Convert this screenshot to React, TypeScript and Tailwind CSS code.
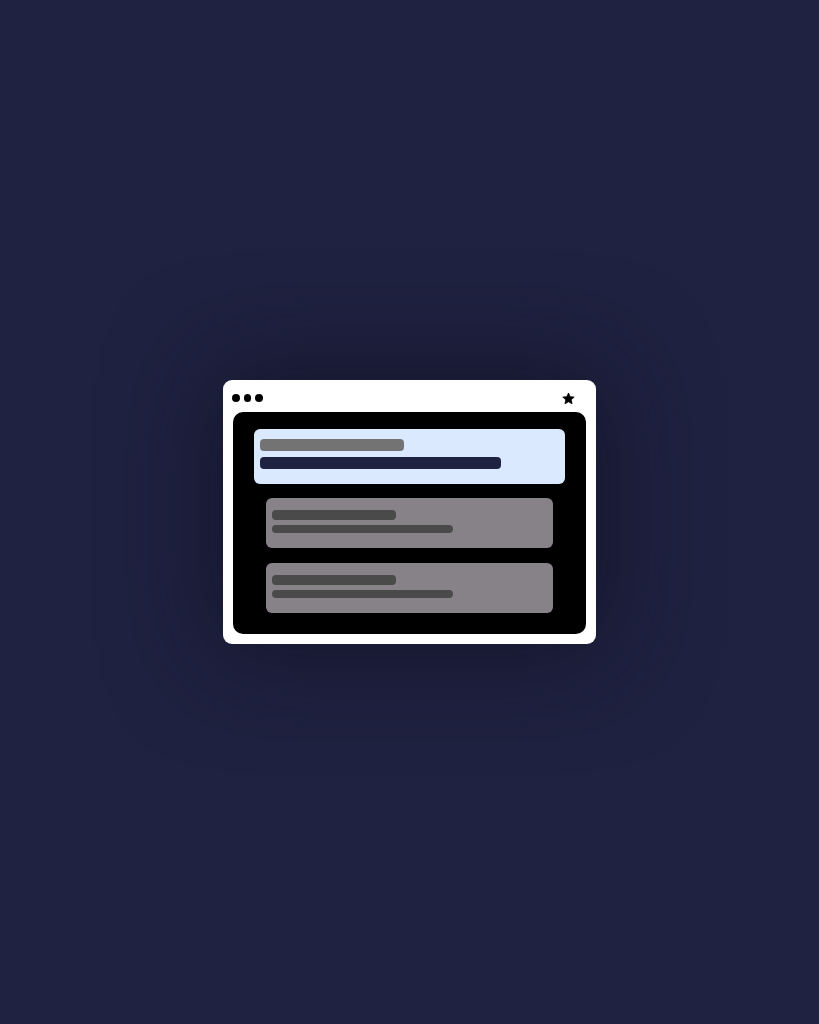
import { Star } from 'lucide-react'

function ListRow() {
  return (
    <div className="w-[287px] h-[50px] rounded-[6px] bg-[#878287] pl-[6px] pt-[12px] flex flex-col gap-[5px]">
      <div className="w-[124px] h-[10px] rounded-[4px] bg-[#4a4a4a]" />
      <div className="w-[181px] h-[8px] rounded-[4px] bg-[#4a4a4a]" />
    </div>
  )
}

export default function App() {
  return (
    <div className="min-h-[1024px] w-full bg-[#1f2240] flex items-center justify-center">
      <div className="w-[373px] rounded-[9px] bg-white shadow-[0_0_100px_12px_rgba(12,12,28,0.5)] flex flex-col">
        {/* window header */}
        <div className="h-[32px] pl-[9px] pr-[21px] pt-[4px] flex items-center justify-between">
          <div className="flex gap-[4px]">
            <span className="w-[7.5px] h-[7.5px] rounded-full bg-black" />
            <span className="w-[7.5px] h-[7.5px] rounded-full bg-black" />
            <span className="w-[7.5px] h-[7.5px] rounded-full bg-black" />
          </div>
          <svg width="13" height="13" viewBox="0 0 24 24" className="text-black">
            <path
              d="M12 1.8l3.1 6.9 7.4.7-5.6 5 1.7 7.4L12 17.9l-6.6 3.9 1.7-7.4-5.6-5 7.4-.7z"
              fill="currentColor"
              stroke="currentColor"
              strokeWidth="1.5"
              strokeLinejoin="round"
            />
          </svg>
        </div>

        {/* content panel */}
        <div className="mx-[10px] mb-[10px] rounded-[10px] bg-black pt-[17px] pb-[21px] flex flex-col items-center">
          <div className="w-[311px] h-[55px] rounded-[6px] bg-[#dbe9fe] pl-[6px] pt-[10px] flex flex-col gap-[5.5px]">
            <div className="w-[144px] h-[12px] rounded-[4px] bg-[#737373]" />
            <div className="w-[241px] h-[12px] rounded-[4px] bg-[#1f2342]" />
          </div>
          <div className="mt-[14px] flex flex-col gap-[15px]">
            <ListRow />
            <ListRow />
          </div>
        </div>
      </div>
    </div>
  )
}
